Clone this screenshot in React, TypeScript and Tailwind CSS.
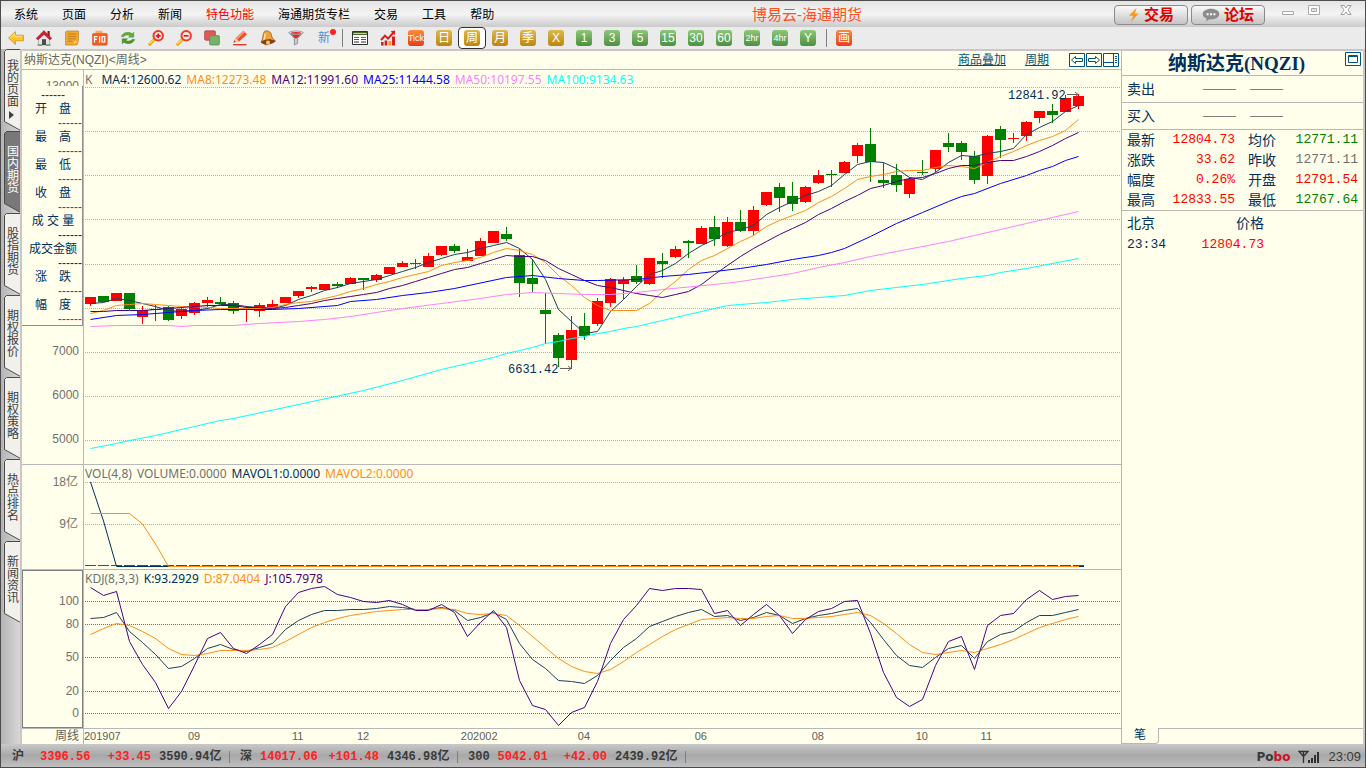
import React from "react";

type Candle = [up: number, top: number, bottom: number, high: number, low: number];

// weekly candles, chart units: [up, body top, body bottom, high, low]
const candles: Candle[] = [
  [1, 297, 304, 297, 306], [0, 296, 302, 296, 302], [1, 293, 301, 293, 301], [0, 293, 309, 293, 310],
  [1, 310, 317, 306, 324], [0, 309, 310, 305, 321], [0, 307, 320, 306, 321], [1, 309, 316, 307, 319],
  [1, 303, 313, 302, 315], [1, 300, 303, 297, 307], [0, 302, 304, 297, 304], [0, 303, 311, 301, 314],
  [1, 308, 309, 306, 322], [1, 305, 311, 303, 317], [1, 304, 307, 300, 308], [1, 297, 303, 297, 303],
  [1, 291, 296, 291, 298], [1, 287, 289, 286, 292], [1, 284, 290, 284, 290], [0, 284, 286, 282, 288],
  [1, 278, 284, 277, 284], [0, 278, 280, 278, 290], [1, 275, 280, 274, 282], [1, 267, 274, 267, 274],
  [1, 263, 267, 261, 267], [1, 263, 264, 259, 269], [1, 256, 267, 253, 267], [1, 246, 255, 246, 256],
  [0, 246, 251, 244, 253], [1, 257, 261, 249, 261], [1, 241, 256, 238, 256], [1, 231, 243, 231, 243],
  [0, 234, 239, 227, 241], [0, 255, 283, 249, 297], [0, 278, 284, 259, 292], [0, 310, 314, 293, 344],
  [0, 335, 358, 333, 367], [1, 330, 360, 316, 369], [0, 326, 336, 313, 340], [1, 301, 324, 298, 326],
  [1, 279, 303, 278, 307], [1, 280, 284, 277, 299], [0, 276, 282, 265, 284], [1, 258, 284, 258, 285],
  [0, 261, 264, 253, 278], [1, 249, 257, 246, 258], [0, 241, 243, 240, 258], [1, 228, 244, 226, 244],
  [0, 227, 239, 216, 246], [1, 222, 246, 217, 247], [0, 222, 231, 210, 232], [1, 210, 231, 206, 235],
  [1, 192, 205, 192, 206], [0, 187, 198, 183, 212], [0, 196, 204, 182, 211], [1, 187, 202, 186, 203],
  [1, 175, 183, 170, 184], [0, 174, 175, 170, 187], [1, 162, 173, 161, 173], [1, 145, 156, 143, 163],
  [0, 144, 162, 128, 182], [0, 180, 183, 163, 188], [0, 175, 185, 164, 192], [1, 179, 194, 177, 198],
  [0, 172, 173, 160, 175], [1, 150, 169, 150, 172], [0, 143, 147, 133, 152], [0, 143, 152, 141, 160],
  [0, 156, 180, 151, 184], [1, 136, 176, 135, 184], [0, 129, 140, 126, 158], [1, 138, 139, 133, 143],
  [1, 122, 136, 121, 141], [1, 111, 118, 111, 123], [0, 111, 115, 104, 123], [1, 98, 112, 95, 112],
  [1, 96, 106, 94, 109],
];

const ma4 = [
  303, 302, 298, 300, 303, 306, 310, 311, 310, 308, 304, 304, 306, 307, 308, 305, 299, 295, 290, 287, 283, 281, 279, 275,
  271, 267, 262, 258, 254, 252, 248, 245, 242, 248, 259, 279, 309, 321, 333, 331, 311, 299, 286, 274, 270, 263, 253, 245,
  239, 232, 229, 225, 214, 207, 201, 195, 191, 185, 174, 164, 161, 162, 168, 177, 179, 172, 162, 155, 156, 153, 151, 148,
  134, 127, 121, 111, 105,
];
const ma8 = [
  313, 310, 305, 304, 303, 304, 305, 306, 306, 307, 308, 308, 308, 308, 307, 304, 302, 301, 298, 295, 291, 288, 284, 281,
  277, 274, 271, 265, 262, 260, 257, 252, 248, 250, 254, 262, 275, 285, 297, 305, 310, 310, 310, 303, 291, 281, 269, 260,
  255, 248, 241, 235, 226, 220, 215, 210, 202, 196, 188, 179, 176, 174, 171, 170, 170, 167, 165, 166, 168, 162, 156, 151,
  145, 140, 136, 130, 119,
];
const ma12 = [
  311, 311, 310, 310, 310, 309, 308, 307, 306, 305, 305, 305, 307, 307, 308, 307, 305, 303, 300, 298, 296, 294, 292, 288,
  285, 281, 277, 273, 269, 267, 263, 259, 255, 256, 256, 260, 268, 274, 280, 285, 287, 290, 293, 295, 297, 294, 291, 284,
  274, 265, 256, 248, 241, 234, 228, 222, 214, 208, 201, 195, 188, 185, 181, 178, 177, 173, 168, 165, 165, 162, 160, 160,
  156, 151, 145, 138, 132,
];

const ma25 = [
  [0, 319], [2, 315], [4, 314], [6, 312], [8, 310], [10, 309], [14, 309], [16, 308], [19, 305], [20, 301], [22, 299],
  [24, 295], [26, 292], [28, 288], [32, 277], [34, 275], [36, 278], [38, 280], [39, 280], [42, 279], [44, 276],
  [46, 274], [48, 271], [50, 268], [52, 264], [54, 259], [56, 255], [57, 252], [58, 248], [60, 236], [62, 223],
  [64, 212], [66, 201], [67, 196], [68, 193], [70, 183], [72, 175], [73, 170], [74, 166], [75, 160], [76, 156],
];
const ma50 = [
  [0, 326], [2, 325], [6, 325], [7, 326], [8, 325], [11, 325], [13, 323], [16, 321], [18, 319], [20, 316], [22, 312],
  [24, 308], [27, 303], [30, 298], [32, 294], [34, 292], [36, 293], [38, 294], [40, 294], [42, 292], [44, 289],
  [48, 284], [50, 281], [52, 277], [54, 273], [56, 267], [58, 262], [60, 256], [62, 251], [64, 246], [66, 241],
  [68, 235], [70, 229], [72, 223], [74, 217], [76, 211],
];
const ma100 = [
  [0, 448], [2, 443], [3, 440], [5, 435], [8, 426], [10, 420], [11, 418], [16, 404], [21, 390], [24, 380], [27, 369],
  [28, 366], [29, 363], [30, 360], [31, 357], [32, 353], [33, 350], [34, 347], [35, 343], [36, 341], [37, 338],
  [38, 336], [39, 333], [40, 331], [41, 328], [42, 326], [43, 323], [44, 320], [45, 317], [46, 314], [47, 311],
  [48, 308], [49, 305], [50, 304], [52, 302], [54, 299], [58, 295], [60, 290], [62, 287], [64, 284], [67, 278],
  [69, 275], [70, 272], [72, 268], [74, 263], [76, 258],
];

const kdjK = [
  618, 617, 612, 631, 642, 654, 668, 666, 658, 648, 644, 649, 651, 647, 643, 629, 620, 614, 610, 610, 609, 609, 608, 606,
  607, 609, 609, 607, 610, 620, 617, 612, 619, 643, 659, 668, 680, 681, 683, 675, 660, 647, 638, 626, 621, 616, 612, 609,
  616, 615, 620, 617, 612, 615, 623, 618, 615, 613, 610, 608, 622, 639, 655, 665, 667, 657, 648, 645, 658, 641, 634, 631,
  622, 615, 615, 612, 609,
];
const kdjD = [
  634, 628, 623, 625, 631, 638, 648, 654, 655, 653, 650, 650, 650, 649, 647, 641, 634, 627, 622, 618, 615, 613, 611, 610,
  609, 609, 609, 608, 609, 613, 614, 613, 615, 625, 636, 647, 658, 666, 671, 673, 669, 661, 652, 644, 636, 629, 624, 619,
  618, 617, 618, 618, 616, 615, 618, 618, 617, 616, 614, 612, 615, 623, 633, 644, 652, 654, 652, 650, 652, 648, 644, 639,
  633, 627, 623, 619, 616,
];
const kdjJ = [
  587, 595, 591, 641, 664, 682, 708, 691, 665, 638, 632, 648, 653, 644, 634, 606, 592, 588, 586, 594, 597, 601, 602, 600,
  604, 610, 610, 604, 612, 636, 622, 610, 627, 680, 705, 709, 725, 712, 707, 681, 643, 619, 605, 588, 590, 588, 588, 589,
  613, 610, 625, 614, 604, 615, 633, 619, 611, 608, 601, 600, 633, 672, 697, 706, 699, 665, 641, 636, 669, 625, 615, 613,
  599, 590, 599, 596, 595,
];

const weekX = (week: number) => 90 + week * 13;
const dense = (ys: number[]) => ys.map((y, i) => `${weekX(i) + 0.5},${y + 0.5}`).join(" ");
const sparse = (pts: number[][]) => pts.map(([i, y]) => `${weekX(i) + 0.5},${y + 0.5}`).join(" ");

const menus = ["系统", "页面", "分析", "新闻", "特色功能", "海通期货专栏", "交易", "工具", "帮助"];
const sideTabs = ["我的页面", "国内期货", "股指期货", "期权报价", "期权策略", "热点排名", "新闻资讯"];
const periods = [
  { label: "Tick", tone: "red" },
  { label: "日", tone: "gold" },
  { label: "周", tone: "gold", active: true },
  { label: "月", tone: "gold" },
  { label: "季", tone: "gold" },
  { label: "X", tone: "gold" },
  { label: "1", tone: "green" },
  { label: "3", tone: "green" },
  { label: "5", tone: "green" },
  { label: "15", tone: "green" },
  { label: "30", tone: "green" },
  { label: "60", tone: "green" },
  { label: "2hr", tone: "green" },
  { label: "4hr", tone: "green" },
  { label: "Y", tone: "green" },
];

const cursorRows = [
  { label: "开　盘", color: "text-[#ff0000]" },
  { label: "最　高", color: "text-[#ff0000]" },
  { label: "最　低", color: "text-[#ff0000]" },
  { label: "收　盘", color: "text-[#ff0000]" },
  { label: "成 交 量", color: "text-[#003060]" },
  { label: "成交金额", color: "text-[#003060]" },
  { label: "涨　跌", color: "text-[#ff0000]" },
  { label: "幅　度", color: "text-[#ff0000]" },
];

// each month label is as wide as the weeks that follow it
const months = [
  { label: "201907", weeks: 8 },
  { label: "09", weeks: 8 },
  { label: "11", weeks: 5 },
  { label: "12", weeks: 8 },
  { label: "202002", weeks: 9 },
  { label: "04", weeks: 9 },
  { label: "06", weeks: 9 },
  { label: "08", weeks: 8 },
  { label: "10", weeks: 5 },
  { label: "11", weeks: 10.8 },
];

const quotes = [
  ["最新", "12804.73", "text-[#ff0000]", "均价", "12771.11", "text-[#008000]"],
  ["涨跌", "33.62", "text-[#ff0000]", "昨收", "12771.11", "text-[#707070]"],
  ["幅度", "0.26%", "text-[#ff0000]", "开盘", "12791.54", "text-[#ff0000]"],
  ["最高", "12833.55", "text-[#ff0000]", "最低", "12767.64", "text-[#008000]"],
];

const indices = [
  { name: "沪", value: "3396.56", change: "+33.45", amount: "3590.94亿", gap: "gap-4" },
  { name: "深", value: "14017.06", change: "+101.48", amount: "4346.98亿", gap: "gap-2" },
  { name: "300", value: "5042.01", change: "+42.00", amount: "2439.92亿", gap: "gap-2" },
];

function Svg({ children }: { children: React.ReactNode }) {
  return (
    <svg viewBox="0 0 16 16" className="size-4" aria-hidden="true">
      {children}
    </svg>
  );
}

function Magnifier({ minus = false }: { minus?: boolean }) {
  return (
    <Svg>
      <path d="M1.8 14.2 6 9.5" stroke="#f5a800" strokeWidth="3.2" strokeLinecap="round" />
      <path d="M1.7 13.4 5.2 9.8" stroke="#ffe26a" strokeWidth="1.2" strokeLinecap="round" />
      <circle cx="10.2" cy="5.8" r="4.7" fill="#ffe9e6" stroke="#ee3a26" strokeWidth="2" />
      <path d={minus ? "M7.8 5.8h4.8" : "M7.8 5.8h4.8M10.2 3.4v4.8"} stroke="#e01818" strokeWidth="1.7" />
    </Svg>
  );
}

const tools = [
  {
    name: "后退",
    icon: (
      <Svg>
        <path d="M.6 8 7.4 1.6v3.6h8v5.6h-8v3.6z" fill="#ffc425" stroke="#c8901a" strokeWidth=".8" />
        <path d="M2.4 7.6 6.6 3.8v2.5h7.8" fill="none" stroke="#ffe58a" strokeWidth="1" />
      </Svg>
    ),
  },
  {
    name: "首页",
    icon: (
      <Svg>
        <path d="M11.5 1h2.2v5h-2.2z" fill="#8b1a1a" />
        <path d="M2.4 8 8 3.2 13.6 8v7H2.4z" fill="#e4e4e8" stroke="#8a8a8a" strokeWidth=".6" />
        <path d="M.2 8.4 8 .6l7.8 7.8-1.8 1.4L8 4.400 2 9.800z" fill="#cf2030" stroke="#941016" strokeWidth=".5" />
        <path d="M6 9.200h4V15H6z" fill="#4b4b55" />
        <path d="M1.500 15.200h4.500M10 15.200h4.500" stroke="#4d9a32" strokeWidth="1.200" />
      </Svg>
    ),
  },
  {
    name: "记事",
    icon: (
      <Svg>
        <path d="M2.500 1h12v9.800l-1.600 4.200H1.500V2z" fill="#f0a92c" stroke="#c4821a" strokeWidth=".7" />
        <path d="M4 4h8.600M4 6.400h8.600M3.600 8.800h8.400M3.400 11.200h5" stroke="#b97a18" strokeWidth=".9" />
        <path d="M9.500 14.800c1-.6.8-2.600.6-3.600 1.600.5 3 .3 4.400-.6z" fill="#ffd98a" />
      </Svg>
    ),
  },
  {
    name: "F10",
    icon: (
      <Svg>
        <path d="M3.500.8h7v3h5v8h-12z" fill="#ffb14a" />
        <rect x=".4" y="3.400" width="14.800" height="11.800" rx="1.200" fill="#f0602a" stroke="#d04410" strokeWidth=".5" />
        <path d="M2.500 12.400V6.600h2.900M2.500 9.300h2.400M7.600 6.300v6.100M10.100 6.700h2.700v5.300h-2.700z" fill="none" stroke="#fff" strokeWidth="1.200" />
      </Svg>
    ),
  },
  {
    name: "刷新",
    icon: (
      <Svg>
        <path d="M1.200 6.600C2.800 2.400 8.800 1 12 3.800l1.800-1.600v5H8.400l1.800-1.600C8 4.400 5 5 3.600 6.800z" fill="#5cae3c" stroke="#3f8a26" strokeWidth=".4" />
        <path d="M14.800 9.400C13.200 13.600 7.200 15 4 12.200L2.200 13.800v-5h5.400l-1.800 1.600C8 11.600 11 11 12.400 9.200z" fill="#4a9a2e" stroke="#34791e" strokeWidth=".4" />
      </Svg>
    ),
  },
  { name: "放大", icon: <Magnifier /> },
  { name: "缩小", icon: <Magnifier minus /> },
  {
    name: "叠加",
    icon: (
      <Svg>
        <rect x=".6" y=".8" width="10.800" height="9.400" rx="1.200" fill="#dc5a58" stroke="#b33a3a" strokeWidth=".7" />
        <rect x="5.600" y="5.600" width="9.800" height="9.400" rx="1.200" fill="#76b26c" stroke="#4d8a46" strokeWidth=".7" />
      </Svg>
    ),
  },
  {
    name: "画线",
    icon: (
      <Svg>
        <path d="M1.600 12.400 3.800 8 11.400.8l3.600 3.400-7.800 7.400z" fill="#f24a2c" />
        <path d="M4 8 11.600 1l1.200 1.200L5.400 9.200z" fill="#ff9a80" />
        <path d="M1.600 12.400 3.800 8l3.400 3.600z" fill="#f7cf9c" />
        <path d="m1.600 12.400.9-1.900 1.100 1.100z" fill="#333" />
        <path d="M1 14.700h13.500" stroke="#e03020" strokeWidth="1.300" />
      </Svg>
    ),
  },
  {
    name: "预警",
    icon: (
      <Svg>
        <path d="M4.600 1.400c2.600-1.500 6.400.3 6.900 3.900.3 2.400 1.600 4 4 5.700L6 15 1 12.200C3.400 9 2.400 3.400 4.600 1.400z" fill="#eaa63a" stroke="#a4551a" strokeWidth=".8" />
        <path d="M1 12.200c2.800-3 9.200-4 14.500-1.200C13 14.400 5 16 1 12.200z" fill="#8c3b12" />
        <circle cx="8" cy="12.400" r="2" fill="#ffcf5a" />
        <path d="M5.400 3.400C4.600 5.400 5 7.600 3.800 9.600" fill="none" stroke="#ffe6a0" strokeWidth="1.400" />
      </Svg>
    ),
  },
  {
    name: "筛选",
    icon: (
      <Svg>
        <path d="M1 2.600 6.400 8.600V15l3.200-1.600V8.600L15 2.600z" fill="#c9c9cf" stroke="#77777e" strokeWidth=".7" />
        <path d="M3.400 4.200h9.200L9 8.200H7z" fill="#e02626" />
        <ellipse cx="8" cy="2.700" rx="7" ry="1.700" fill="#f2f2f4" stroke="#77777e" strokeWidth=".7" />
        <ellipse cx="8" cy="2.900" rx="5" ry=".9" fill="#e02626" />
      </Svg>
    ),
  },
];

function PeriodIcon({ label, tone }: { label: string; tone: string }) {
  const tones: Record<string, string> = {
    red: "from-[#f98a3c] to-[#e83a1c]",
    gold: "from-[#dcb84e] to-[#bd8600]",
    green: "from-[#8cc878] to-[#4c9040]",
  };
  const size = label.length > 2 ? "text-[9px]" : "text-xs";
  return (
    <span
      className={`flex size-4 items-center justify-center overflow-hidden rounded-[3px] bg-linear-to-b leading-4 text-white ${size} ${tones[tone]}`}
    >
      {label}
    </span>
  );
}

function TitleBar() {
  return (
    <header className="flex h-[26px] shrink-0 items-center bg-linear-to-b from-[#e4e4e4] via-[#f4f4f4] to-[#cbcbcb] pt-0.5 pl-[13px]">
      <nav className="flex flex-1 gap-6 whitespace-nowrap text-xs text-black">
        {menus.map((m) => (
          <button key={m} className={m === "特色功能" ? "text-[#ff0000]" : ""}>
            {m}
          </button>
        ))}
      </nav>
      <h1 className="mr-[252px] text-[15px] whitespace-nowrap text-[#ff4f1a]">博易云-海通期货</h1>
      <div className="flex w-[251px] items-start gap-[3px]">
        <button className="flex h-5 w-[74px] items-center justify-center gap-1 rounded border border-[#8a8a8a] bg-linear-to-b from-[#fafafa] to-[#c4c4c4] text-[15px] font-bold text-[#e00000]">
          <svg viewBox="0 0 12 16" className="h-4 w-3" aria-hidden="true">
            <path d="M8.600.8 1 8.800h4.200L2.600 15.200l8.200-8.600H6.800z" fill="#f79a1c" />
          </svg>
          交易
        </button>
        <button className="flex h-5 w-[74px] items-center justify-center gap-1 rounded border border-[#8a8a8a] bg-linear-to-b from-[#fafafa] to-[#c4c4c4] text-[15px] font-bold text-[#e00000]">
          <svg viewBox="0 0 18 14" className="h-3.5 w-[18px]" aria-hidden="true">
            <path d="M9 .8c4.700 0 8.300 2.300 8.300 5.400S13.700 11.400 9 11.400c-.5 0-1 0-1.500-.1L4.200 13.400l.4-2.900C2.200 9.600.700 8.100.700 6.200.700 3.100 4.300.8 9 .8z" fill="#8c8c8c" />
            <path d="M4.600 5.200h2v2h-2zM8 5.200h2v2H8zM11.400 5.200h2v2h-2z" fill="#fff" />
          </svg>
          论坛
        </button>
        <div className="ml-3 flex gap-3">
          <button aria-label="最小化" className="w-4">
            <svg viewBox="0 0 16 14" className="h-3.5 w-4">
              <path d="M2.500 6.500h11v3h-11z" fill="#fff" stroke="#a8a8a8" />
            </svg>
          </button>
          <button aria-label="最大化" className="w-4">
            <svg viewBox="0 0 16 14" className="h-3.5 w-4">
              <path d="M.500.500h11v9H.500z" fill="#fff" stroke="#a8a8a8" />
              <path d="M3.500 3.500h5v3h-5z" fill="#e4e4e4" stroke="#a8a8a8" />
            </svg>
          </button>
          <button aria-label="关闭" className="w-4">
            <svg viewBox="0 0 16 14" className="ml-1 h-3.5 w-4">
              <path d="M.800.500h3.400L6 3l1.800-2.500h3.400L8 5l3.200 4.500H7.800L6 7l-1.800 2.500H.800L4 5z" fill="#fff" stroke="#a0a0a0" />
            </svg>
          </button>
        </div>
      </div>
    </header>
  );
}

function Toolbar() {
  return (
    <div className="flex h-[22px] shrink-0 items-center bg-[#ebebeb] pl-px">
      {tools.map((t) => (
        <button key={t.name} aria-label={t.name} className="flex w-7 items-center justify-center">
          {t.icon}
        </button>
      ))}
      <button className="relative flex w-7 items-center justify-center text-xs leading-4 text-[#4a90d9]">
        新
        <span className="absolute -top-px right-0.5 size-1.5 rounded-full bg-[#ff2020]" />
      </button>
      <span className="ml-1 h-4.5 w-1 border-l border-[#808080]" />
      <button aria-label="报价" className="flex w-7 items-center justify-center">
        <Svg>
          <path d="M.500 1.500h15v13H.500z" fill="#fff" stroke="#303030" />
          <path d="M1 2h14v3H1z" fill="#4e6a2a" />
          <path d="M1.500 3.500h13" stroke="#c7d27a" />
          <path d="M2 7.500h5M9 7.500h5" stroke="#2f8f2f" />
          <path d="M2 9.500h5M9 9.500h5" stroke="#d02020" />
          <path d="M2 12h5M9 12h5" stroke="#303030" />
        </Svg>
      </button>
      <button aria-label="走势" className="flex w-7 items-center justify-center">
        <Svg>
          <path d="M1 12h2.600v3.500H1zM4.600 10.500h2.600v5H4.600zM12 6.500h3v9h-3z" fill="#d81e1e" />
          <path d="M8.400 11h2.800v4.500H8.400z" fill="#f0a020" />
          <path d="M1 10 5 5.600l3 3L14 2" fill="none" stroke="#d81e1e" strokeWidth="2" />
          <path d="M10.600 1.200 15.200.6l-.4 4.600z" fill="#d81e1e" />
        </Svg>
      </button>
      {periods.map((p) => (
        <button
          key={p.label}
          className={`flex h-[22px] w-7 items-center justify-center ${p.active ? "rounded-sm border border-[#303030] bg-white" : ""}`}
        >
          <PeriodIcon label={p.label} tone={p.tone} />
        </button>
      ))}
      <span className="ml-1 h-4.5 w-1 border-l border-[#808080]" />
      <button className="flex w-7 items-center justify-center">
        <PeriodIcon label="画" tone="red" />
      </button>
    </div>
  );
}

function SideTabs() {
  return (
    <nav className="flex w-[19px] shrink-0 flex-col bg-linear-to-r from-[#b4b4b4] to-[#d8d8d8]">
      {sideTabs.map((tab) => {
        const active = tab === "国内期货";
        return (
          <button
            key={tab}
            className={`relative flex h-[82px] w-full items-center justify-center pb-1.5 pl-0.5 text-xs leading-4 ${active ? "text-white" : "text-[#404040]"}`}
          >
            <svg viewBox="0 0 19 82" className="absolute inset-0 h-full w-full" aria-hidden="true">
              <path
                d="M19.500 .5H5.500l-2 2V72.500L19.500 81.500"
                fill={active ? "#787878" : "#f1f0ea"}
                stroke="#4a4a4a"
              />
            </svg>
            <span className={`relative [writing-mode:vertical-rl] ${tab === "我的页面" ? "pb-2" : ""}`}>{tab}</span>
            {tab === "我的页面" && (
              <svg viewBox="0 0 5 8" className="absolute bottom-3 left-2 h-2 w-[5px]" aria-hidden="true">
                <path d="M0 0v8l5-4z" fill="#404040" />
              </svg>
            )}
          </button>
        );
      })}
    </nav>
  );
}

function ChartHeader() {
  return (
    <div className="flex h-[19px] shrink-0 items-center border-b border-[#b8b8b8] px-[2px] text-xs leading-4">
      <h2 className="flex-1 text-[#666666]">纳斯达克(NQZI)&lt;周线&gt;</h2>
      <a href="#overlay" className="mr-[19px] text-[#005580] underline">
        商品叠加
      </a>
      <a href="#period" className="mr-5 text-[#005580] underline">
        周期
      </a>
      <div className="flex gap-px">
        <button aria-label="向左">
          <svg viewBox="0 0 16 14" className="h-3.5 w-4">
            <path d="M.500.500h15v13H.500zM2.500 7 6.500 3.500v2h7v3h-7v2z" fill="none" stroke="#005580" />
          </svg>
        </button>
        <button aria-label="向右">
          <svg viewBox="0 0 16 14" className="h-3.5 w-4">
            <path d="M.500.500h15v13H.500zM13.500 7 9.500 3.500v2h-7v3h7v2z" fill="none" stroke="#005580" />
          </svg>
        </button>
        <button aria-label="布局">
          <svg viewBox="0 0 16 14" className="h-3.5 w-4">
            <path d="M.500.500h15v13H.500zM10.500 1v12M1 9.500h9.500" fill="none" stroke="#005580" />
            <path d="M12 3.500h2M12 5.500h2M12 7.500h2M12 9.500h2" stroke="#005580" />
          </svg>
        </button>
      </div>
    </div>
  );
}

function Legend({ title, items }: { title: string; items: [string, string][] }) {
  return (
    <div className="flex h-4 shrink-0 items-center gap-[5px] pt-0.5 pl-px font-['Noto_Sans'] text-xs leading-4 whitespace-nowrap">
      <span className="text-[#707070]">{title}</span>
      {items.map(([text, color]) => (
        <span key={text} className={color}>
          {text}
        </span>
      ))}
    </div>
  );
}

function Grid({ ys, color }: { ys: number[]; color: string }) {
  return (
    <g shapeRendering="crispEdges">
      {ys.map((y) => (
        <line key={y} x1="85" x2="1121" y1={y + 0.5} y2={y + 0.5} stroke={color} strokeDasharray="1 1" />
      ))}
    </g>
  );
}

function PriceAxis() {
  return (
    <div className="relative flex h-full flex-col overflow-hidden pr-1 text-right">
      <div className="h-[39px] pt-2 leading-4">13000</div>
      <div className="mt-[220px]">
        {[7000, 6000, 5000].map((v) => (
          <div key={v} className="h-11 leading-11">
            {v}
          </div>
        ))}
      </div>
      {/* cursor readout covers the upper part of the axis */}
      <div className="absolute top-4 right-0 left-0 border-r border-b border-[#909090] bg-[#ffffeb] pt-[3px] pl-0.5 text-center text-[#003060]">
        <div className="leading-3">------</div>
        {cursorRows.map((row) => (
          <div key={row.label}>
            <div className="leading-4 whitespace-pre">{row.label}</div>
            <div className={`text-right leading-3 ${row.color}`}>------</div>
          </div>
        ))}
      </div>
    </div>
  );
}

function PriceChart() {
  return (
    <svg viewBox="84 87 1037 377" preserveAspectRatio="xMinYMin meet" className="min-h-0 w-full flex-1">
      <Grid ys={[87, 131, 175, 219, 264, 308, 352, 396, 440]} color="#b0b0b0" />
      <g shapeRendering="crispEdges">
        {candles.map(([up, top, bottom, high, low], i) => (
          <g key={i} fill={up ? "#ff0000" : "#008000"}>
            <rect x={weekX(i)} y={high} width="1" height={low - high} />
            <rect x={weekX(i) - 5} y={top} width="11" height={bottom - top} />
          </g>
        ))}
      </g>
      <g fill="none">
        <polyline points={dense(ma4)} stroke="#1c3f60" />
        <polyline points={dense(ma8)} stroke="#ff8c1a" />
        <polyline points={dense(ma12)} stroke="#4b0082" />
        <polyline points={sparse(ma25)} stroke="#0000ff" />
        <polyline points={sparse(ma50)} stroke="#ff80ff" />
        <polyline points={sparse(ma100)} stroke="#00ffff" />
      </g>
      <g className="font-['Liberation_Mono'] text-xs" fill="#003060">
        <text x="1008" y="99">
          12841.92
        </text>
        <text x="508" y="373">
          6631.42
        </text>
      </g>
      <path d="M1067 94.500h11m-3-2.500 3 2.500-3 2.500M560 368.500h11m-3-2.500 3 2.500-3 2.500" fill="none" stroke="#606060" />
    </svg>
  );
}

function VolumeChart() {
  return (
    <svg viewBox="84 481 1037 88" preserveAspectRatio="xMinYMin meet" className="min-h-0 w-full flex-1">
      <Grid ys={[482, 524]} color="#b0b0b0" />
      <g shapeRendering="crispEdges">
        {candles.map(([up], i) => (
          <rect key={i} x={weekX(i) - 5} y="565" width="11" height="1" fill={up ? "#ff0000" : "#008000"} />
        ))}
      </g>
      <g fill="none">
        <polyline points="90.500,482 103.500,521 116.500,566.500 1084,566.500" stroke="#003060" />
        <polyline points="90.500,513.500 129.500,513.500 142.500,524 155.500,544 168.500,566.500 1079,566.500" stroke="#ff8c1a" />
      </g>
    </svg>
  );
}

function KdjChart() {
  return (
    <svg viewBox="84 586 1037 142" preserveAspectRatio="xMinYMin meet" className="min-h-0 w-full flex-1">
      <Grid ys={[601, 624, 657, 691, 713]} color="#707070" />
      <g fill="none">
        <polyline points={dense(kdjK)} stroke="#1c3f60" />
        <polyline points={dense(kdjD)} stroke="#ff8c1a" />
        <polyline points={dense(kdjJ)} stroke="#4b0082" />
      </g>
    </svg>
  );
}

function ChartArea() {
  return (
    <main className="flex min-w-0 flex-1 flex-col border-r border-[#b8b8b8]">
      <ChartHeader />
      <section className="flex min-h-0 flex-1 border-b border-[#b8b8b8]">
        <div className="w-[62px] shrink-0 border-r border-[#b8b8b8] text-xs text-[#707070]">
          <PriceAxis />
        </div>
        <div className="flex min-w-0 flex-1 flex-col pt-px">
          <Legend
            title="K"
            items={[
              ["MA4:12600.62", "pl-1 text-[#003060]"],
              ["MA8:12273.48", "text-[#ff8c1a]"],
              ["MA12:11991.60", "text-[#4b0082]"],
              ["MA25:11444.58", "text-[#0000ff]"],
              ["MA50:10197.55", "text-[#ff80ff]"],
              ["MA100:9134.63", "text-[#00ffff]"],
            ]}
          />
          <PriceChart />
        </div>
      </section>
      <section className="flex h-[105px] shrink-0 border-b border-[#b8b8b8]">
        <div className="w-[62px] shrink-0 border-r border-[#b8b8b8] pr-[5px] text-right text-xs text-[#707070]">
          <div className="leading-[34px]">18亿</div>
          <div className="leading-[50px]">9亿</div>
        </div>
        <div className="flex min-w-0 flex-1 flex-col">
          <Legend
            title="VOL(4,8)"
            items={[
              ["VOLUME:0.0000", "text-[#707070]"],
              ["MAVOL1:0.0000", "text-[#003060]"],
              ["MAVOL2:0.0000", "text-[#ff8c1a]"],
            ]}
          />
          <VolumeChart />
        </div>
      </section>
      <section className="flex h-[159px] shrink-0 border-b border-[#b8b8b8]">
        <div className="w-[62px] shrink-0 border-r border-[#b8b8b8] text-right text-xs leading-4 text-[#707070]">
          <div className="h-full border border-[#808080] pt-[22px] pr-[3px]">
            <div className="mb-[7px]">100</div>
            <div className="mb-[17px]">80</div>
            <div className="mb-[18px]">50</div>
            <div className="mb-[6px]">20</div>
            <div>0</div>
          </div>
        </div>
        <div className="flex min-w-0 flex-1 flex-col">
          <Legend
            title="KDJ(8,3,3)"
            items={[
              ["K:93.2929", "text-[#003060]"],
              ["D:87.0404", "text-[#ff8c1a]"],
              ["J:105.7978", "text-[#4b0082]"],
            ]}
          />
          <KdjChart />
        </div>
      </section>
      <div className="flex h-[15px] shrink-0 text-[11px] leading-[15px] text-[#606060]">
        <div className="w-[62px] shrink-0 border-r border-[#b8b8b8] pr-1 text-right text-xs leading-[15px]">周线</div>
        {months.map((m, i) => (
          <span key={i} className="min-w-0" style={{ flex: `${m.weeks} 0 0` }}>
            {m.label}
          </span>
        ))}
      </div>
    </main>
  );
}

function QuotePanel() {
  return (
    <aside className="flex w-[241px] shrink-0 flex-col text-sm text-[#003060]">
      <div className="relative flex h-[25px] items-center justify-center border-b border-[#b8b8b8] pt-0.5 pr-3">
        <h2 className="font-['Liberation_Serif','Noto_Sans_CJK_SC',serif] text-[19px] leading-6 font-bold">
          纳斯达克(NQZI)
        </h2>
        <button aria-label="窗口" className="absolute top-px right-0.5">
          <svg viewBox="0 0 16 14" className="h-3.5 w-4">
            <path d="M.500.500h15v13H.500zM3.500 3.500h9v7h-9zM3.500 4.500h9" fill="none" stroke="#005580" />
          </svg>
        </button>
      </div>
      {["卖出", "买入"].map((side) => (
        <div key={side} className="flex h-[27px] items-center border-b border-[#b8b8b8] pl-[5px]">
          <span className="w-[76px]">{side}</span>
          <span className="w-[47px] text-[11px] text-[#606060]">———</span>
          <span className="text-[11px] text-[#606060]">———</span>
        </div>
      ))}
      <div className="border-b border-[#b8b8b8]">
        <table className="w-full table-fixed">
          <tbody>
            {quotes.map(([l1, v1, c1, l2, v2, c2]) => (
              <tr key={l1} className="h-5 leading-5">
                <th className="w-[41px] pl-[5px] text-left font-normal">{l1}</th>
                <td className={`w-[72px] text-right font-['Liberation_Mono'] text-[13px] ${c1}`}>{v1}</td>
                <th className="w-[45px] pl-[13px] text-left font-normal">{l2}</th>
                <td className={`pr-[5px] text-right font-['Liberation_Mono'] text-[13px] ${c2}`}>{v2}</td>
              </tr>
            ))}
          </tbody>
        </table>
      </div>
      <table className="w-[142px]">
        <thead>
          <tr className="h-6 leading-5">
            <th className="pl-[5px] text-left font-normal">北京</th>
            <th className="text-right font-normal">价格</th>
          </tr>
        </thead>
        <tbody className="font-['Liberation_Mono'] text-[13px] leading-5">
          <tr>
            <td className="pl-[5px]">23:34</td>
            <td className="text-right text-[#ff0000]">12804.73</td>
          </tr>
        </tbody>
      </table>
      <div className="mt-auto flex h-4 text-xs">
        <button className="w-[37px] rounded-br border-r border-b border-[#b8b8b8] leading-[15px]">笔</button>
        <span className="flex-1 border-t border-[#b8b8b8] bg-[#ffffeb]" />
      </div>
    </aside>
  );
}

function StatusBar() {
  return (
    <footer className="flex h-[23px] shrink-0 items-center bg-linear-to-b from-[#c8c8c8] via-[#a8a8a8] to-[#c0c0c0] pt-0.5 pl-[11px] text-xs font-bold text-[#3a3a3a]">
      {indices.map((row) => (
        <div
          key={row.name}
          className="flex w-[228px] items-center font-['Liberation_Mono','Noto_Sans_CJK_SC',monospace] whitespace-nowrap"
        >
          <div className={`flex w-[139px] ${row.gap}`}>
            <span>{row.name}</span>
            <span className="text-[#ff2020]">{row.value}</span>
            <span className="ml-auto text-[#ff2020]">{row.change}</span>
          </div>
          <span className="ml-2">{row.amount}</span>
          <span className="ml-2 h-3 border-l border-[#808080]" />
        </div>
      ))}
      <span className="ml-auto font-['DejaVu_Sans']">
        Po<span className="text-[#d01020]">bo</span>
      </span>
      <svg viewBox="0 0 22 14" className="ml-2 h-3.5 w-[22px]" aria-hidden="true">
        <path d="M1 1.500h9L5.500 6.500zM5.500 1.500V13" fill="none" stroke="#303030" strokeWidth="1.300" />
        <path d="M10 10h2v3h-2zM13 8h2v5h-2zM16 5h2v8h-2zM19 2h2v11h-2z" fill="#303030" />
      </svg>
      <span className="ml-2 pr-1 text-[13px] font-normal">23:09</span>
    </footer>
  );
}

export default function App() {
  return (
    <div className="flex h-screen flex-col overflow-hidden border border-[#4b4b4b] bg-[#d0d0d0] font-['Liberation_Sans','Noto_Sans_CJK_SC',sans-serif]">
      <TitleBar />
      <Toolbar />
      <div className="flex min-h-0 flex-1">
        <SideTabs />
        <div className="flex min-w-0 flex-1 border-t-2 border-r-2 border-l-2 border-[#cdc5c5] bg-[#ffffeb]">
          <ChartArea />
          <QuotePanel />
        </div>
      </div>
      <StatusBar />
    </div>
  );
}
